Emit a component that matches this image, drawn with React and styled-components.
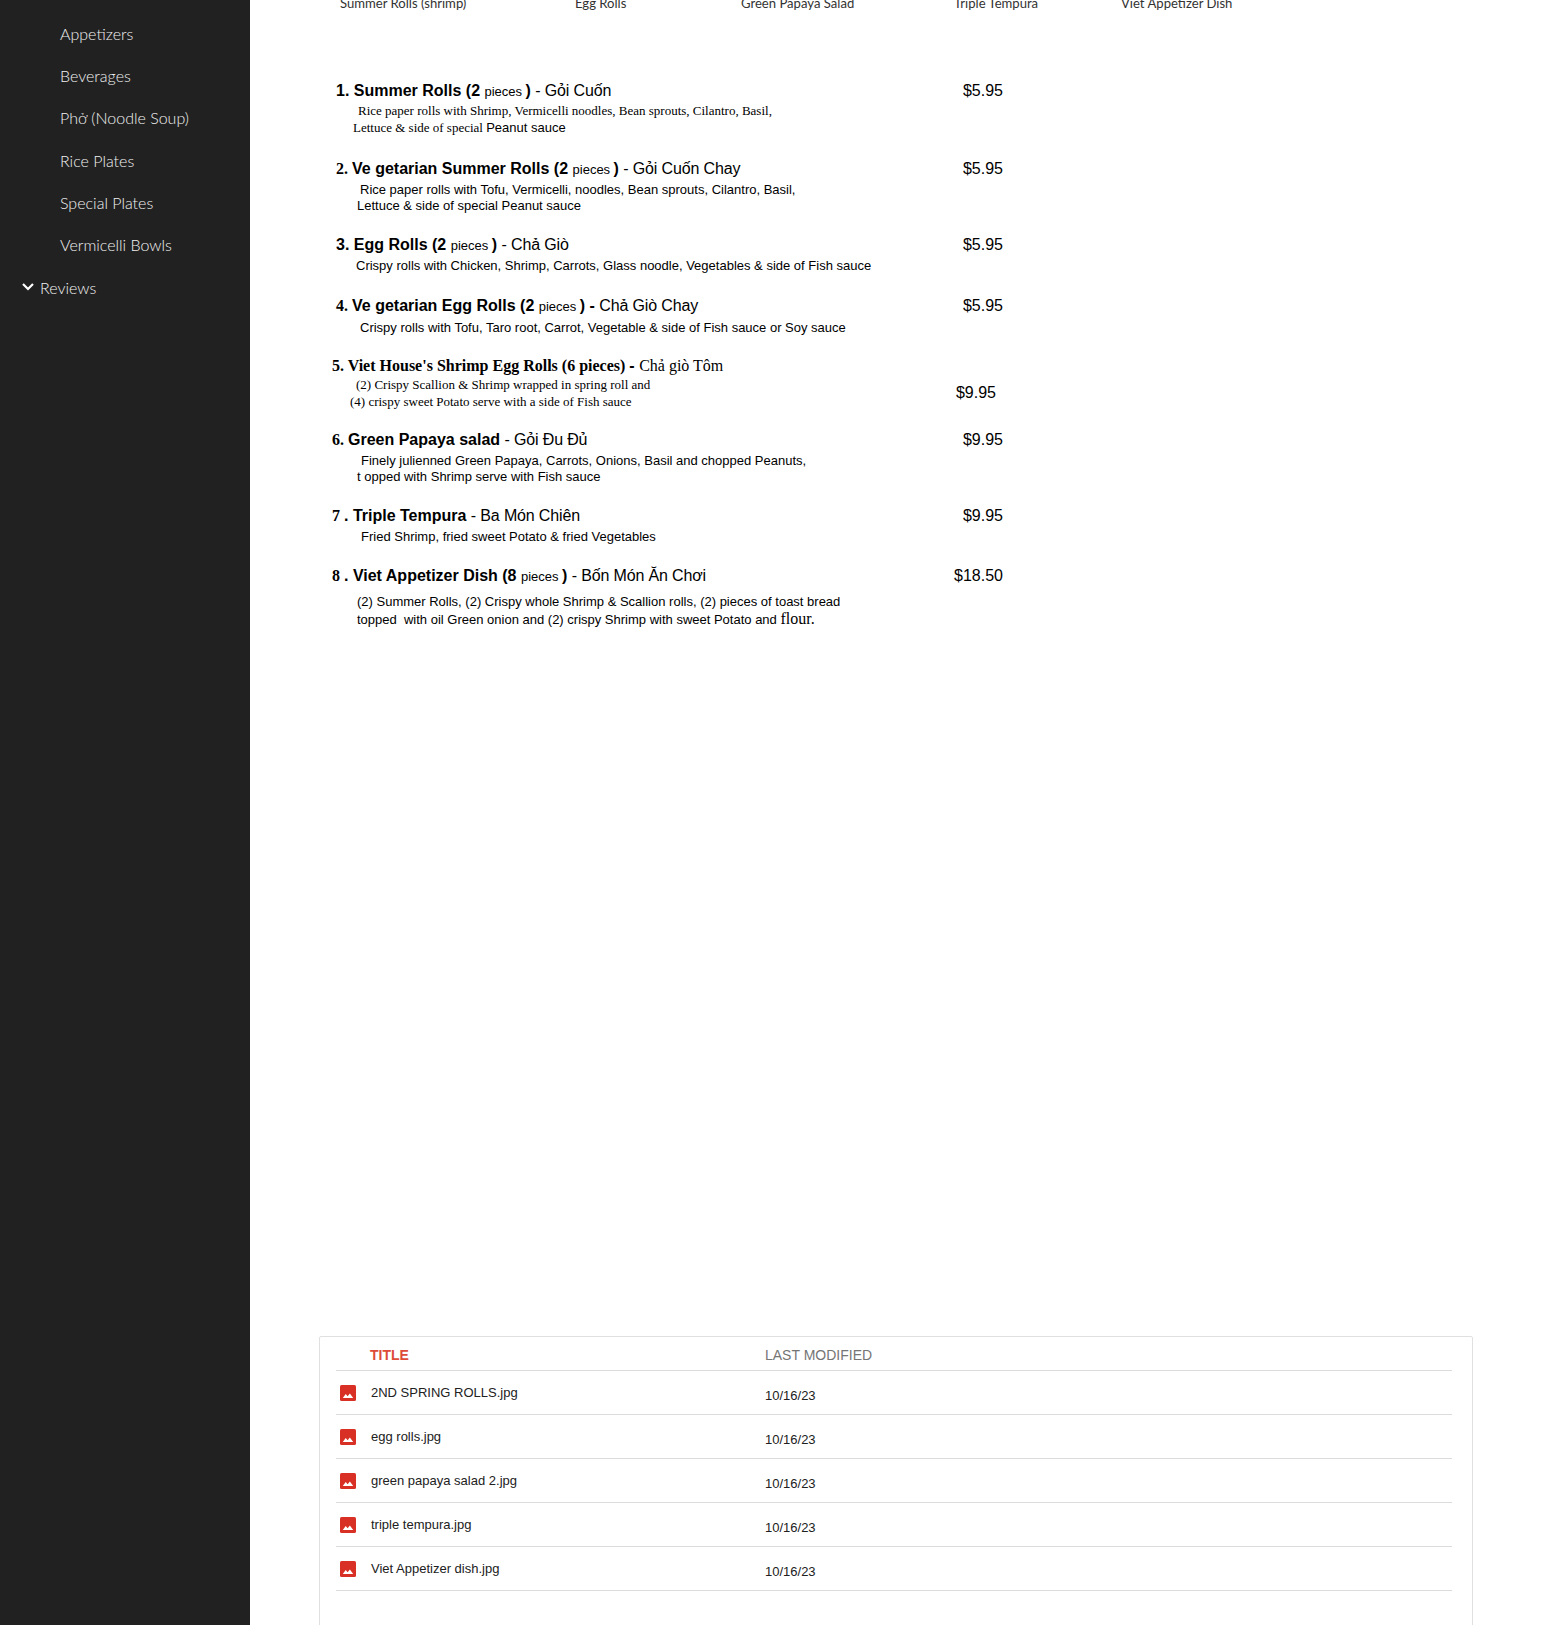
import React from "react"
import styled, { createGlobalStyle } from "styled-components"

const GlobalStyle = createGlobalStyle`
  html, body {
    margin: 0;
    padding: 0;
    background: #fff;
  }
  body {
    font-family: "Liberation Sans", Arial, sans-serif;
    color: #000;
  }
`

const navItems = [
  "Appetizers",
  "Beverages",
  "Phở (Noodle Soup)",
  "Rice Plates",
  "Special Plates",
  "Vermicelli Bowls",
]

const thumbs = [
  { label: "Summer Rolls (shrimp)", width: 235 },
  { label: "Egg Rolls", width: 166 },
  { label: "Green Papaya Salad", width: 213 },
  { label: "Triple Tempura", width: 167 },
  { label: "Viet Appetizer Dish", width: 200 },
]

const files = [
  "2ND SPRING ROLLS.jpg",
  "egg rolls.jpg",
  "green papaya salad 2.jpg",
  "triple tempura.jpg",
  "Viet Appetizer dish.jpg",
]

function ImageIcon() {
  return (
    <svg width="16" height="16" viewBox="0 0 16 16">
      <rect width="16" height="16" rx="1.5" fill="#d93025" />
      <path d="M2.8 13 L5.7 9 L7.6 11.2 L9.9 8.4 L13.2 13 Z" fill="#fff" />
    </svg>
  )
}

function Chevron() {
  return (
    <svg width="14" height="10" viewBox="0 0 14 10">
      <path d="M2 2 L7 7 L12 2" fill="none" stroke="#fff" strokeWidth="2.2" />
    </svg>
  )
}

export default function App() {
  return (
    <Page>
      <GlobalStyle />
      <Sidebar>
        {navItems.map((item) => (
          <NavItem key={item}>{item}</NavItem>
        ))}
        <NavParent>
          <Chevron />
          <span>Reviews</span>
        </NavParent>
      </Sidebar>
      <Content>
        <ThumbRow>
          {thumbs.map((t) => (
            <Thumb key={t.label} $width={t.width}>
              {t.label}
            </Thumb>
          ))}
        </ThumbRow>

        <MenuList>
          <Item $top={69}>
            <ItemBody>
              <Title $indent={4}>
                <b>1. Summer Rolls (2</b> <Small>pieces</Small> <Close>)</Close> <Tail>- Gỏi Cuốn</Tail>
              </Title>
              <Desc $top={1} $indent={26} $serif>
                Rice paper rolls with Shrimp, Vermicelli noodles, Bean sprouts, Cilantro, Basil,
              </Desc>
              <Desc $top={1} $indent={21} $serif>
                Lettuce &amp; side of special <SansRun>Peanut sauce</SansRun>
              </Desc>
            </ItemBody>
            <Price>$5.95</Price>
          </Item>

          <Item $top={23}>
            <ItemBody>
              <Title $indent={4}>
                <SerifBold>2. </SerifBold><b>Ve getarian Summer Rolls (2</b> <Small>pieces</Small> <Close>)</Close> <Tail>- Gỏi Cuốn Chay</Tail>
              </Title>
              <Desc $top={2} $indent={28}>
                Rice paper rolls with Tofu, Vermicelli, noodles, Bean sprouts, Cilantro, Basil,
              </Desc>
              <Desc $indent={25}>Lettuce &amp; side of special Peanut sauce</Desc>
            </ItemBody>
            <Price>$5.95</Price>
          </Item>

          <Item $top={21}>
            <ItemBody>
              <Title $indent={4}>
                <b>3. Egg Rolls (2</b> <Small>pieces</Small> <Close>)</Close> <Tail>- Chả Giò</Tail>
              </Title>
              <Desc $top={2} $indent={24}>
                Crispy rolls with Chicken, Shrimp, Carrots, Glass noodle, Vegetables &amp; side of Fish sauce
              </Desc>
            </ItemBody>
            <Price>$5.95</Price>
          </Item>

          <Item $top={22}>
            <ItemBody>
              <Title $indent={4}>
                <SerifBold>4. </SerifBold><b>Ve getarian Egg Rolls (2</b> <Small>pieces</Small> <Close>) -</Close> <Tail>Chả Giò Chay</Tail>
              </Title>
              <Desc $top={3} $indent={28}>
                Crispy rolls with Tofu, Taro root, Carrot, Vegetable &amp; side of Fish sauce or Soy sauce
              </Desc>
            </ItemBody>
            <Price>$5.95</Price>
          </Item>

          <Item $top={20}>
            <ItemBody>
              <Title>
                <SerifBold>5. Viet House's Shrimp Egg Rolls (6 pieces) </SerifBold><b>-</b> <SerifRun>Chả giò Tôm</SerifRun>
              </Title>
              <Desc $top={1} $indent={24} $serif>
                (2) Crispy Scallion &amp; Shrimp wrapped in spring roll and
              </Desc>
              <Desc $top={1} $indent={18} $serif>
                (4) crispy sweet Potato serve with a side of Fish sauce
              </Desc>
            </ItemBody>
            <Price $centered>$9.95</Price>
          </Item>

          <Item $top={20}>
            <ItemBody>
              <Title>
                <SerifBold>6. </SerifBold><b>Green Papaya salad</b> <Tail>- Gỏi Đu Đủ</Tail>
              </Title>
              <Desc $top={3} $indent={29}>
                Finely julienned Green Papaya, Carrots, Onions, Basil and chopped Peanuts,
              </Desc>
              <Desc $indent={25}>t opped with Shrimp serve with Fish sauce</Desc>
            </ItemBody>
            <Price>$9.95</Price>
          </Item>

          <Item $top={21}>
            <ItemBody>
              <Title>
                <SerifBold>7 </SerifBold><b>. Triple Tempura</b> <Tail>- Ba Món Chiên</Tail>
              </Title>
              <Desc $top={3} $indent={29}>
                Fried Shrimp, fried sweet Potato &amp; fried Vegetables
              </Desc>
            </ItemBody>
            <Price>$9.95</Price>
          </Item>

          <Item $top={21}>
            <ItemBody>
              <Title>
                <SerifBold>8 </SerifBold><b>. Viet Appetizer Dish (8</b> <Small>pieces</Small> <Close>)</Close> <Tail>- Bốn Món Ăn Chơi</Tail>
              </Title>
              <Desc $top={7} $indent={25}>
                (2) Summer Rolls, (2) Crispy whole Shrimp &amp; Scallion rolls, (2) pieces of toast bread
              </Desc>
              <Desc $top={1} $indent={25}>
                topped&nbsp; with oil Green onion and (2) crispy Shrimp with sweet Potato and <Flour>flour.</Flour>
              </Desc>
            </ItemBody>
            <Price>$18.50</Price>
          </Item>
        </MenuList>

        <FileCard>
          <HeaderRow>
            <span />
            <TitleHead>TITLE</TitleHead>
            <ModifiedHead>LAST MODIFIED</ModifiedHead>
          </HeaderRow>
          {files.map((name) => (
            <FileRow key={name}>
              <IconCell>
                <ImageIcon />
              </IconCell>
              <FileName>{name}</FileName>
              <FileDate>10/16/23</FileDate>
            </FileRow>
          ))}
        </FileCard>
      </Content>
    </Page>
  )
}

const Page = styled.div`
  display: flex;
  width: 1542px;
  height: 1625px;
  overflow: hidden;
`

const Sidebar = styled.nav`
  flex: 0 0 250px;
  background: #212121;
  padding-top: 13px;
  font-family: Lato, sans-serif;
  font-weight: 300;
  font-size: 16px;
  color: #f1f1f1;
`

const NavItem = styled.div`
  height: 42.2px;
  line-height: 42px;
  padding-left: 60px;
`

const NavParent = styled.div`
  height: 42px;
  display: flex;
  align-items: center;
  gap: 5px;
  padding-left: 21px;
`

const Content = styled.main`
  flex: 1;
  min-width: 0;
`

const ThumbRow = styled.div`
  display: flex;
  align-items: flex-end;
  height: 12px;
  overflow: hidden;
  padding-left: 90px;
`

const Thumb = styled.div`
  flex: 0 0 ${(p) => p.$width}px;
  font-family: Lato, sans-serif;
  font-size: 13.1px;
  line-height: 17px;
  color: #333;
`

const MenuList = styled.div`
  padding-left: 82px;
  width: 671px;
`

const Item = styled.div`
  display: flex;
  margin-top: ${(p) => p.$top}px;
`

const ItemBody = styled.div`
  flex: 1;
  min-width: 0;
`

const Title = styled.div`
  font-size: 16px;
  line-height: 20px;
  padding-left: ${(p) => p.$indent || 0}px;
  white-space: nowrap;
`

const Small = styled.span`
  font-size: 13px;
`

const Close = styled.b`
  margin-left: -1px;
`

const Tail = styled.span`
  letter-spacing: -0.15px;
`

const SerifBold = styled.b`
  font-family: "Liberation Serif", serif;
`

const SerifRun = styled.span`
  font-family: "Liberation Serif", serif;
`

const SansRun = styled.span`
  font-family: "Liberation Sans", sans-serif;
`

const Desc = styled.div`
  font-family: ${(p) => (p.$serif ? '"Liberation Serif", serif' : '"Liberation Sans", sans-serif')};
  font-size: 13px;
  line-height: 16px;
  margin-top: ${(p) => p.$top || 0}px;
  padding-left: ${(p) => p.$indent || 0}px;
  white-space: nowrap;
`

const Flour = styled.span`
  font-family: "Liberation Serif", serif;
  font-size: 16px;
`

const Price = styled.div`
  font-size: 16px;
  line-height: 20px;
  align-self: ${(p) => (p.$centered ? "center" : "flex-start")};
  margin-right: ${(p) => (p.$centered ? 7 : 0)}px;
  padding-top: ${(p) => (p.$centered ? 20 : 0)}px;
`

const FileCard = styled.section`
  box-sizing: border-box;
  width: 1154px;
  margin: 708px 0 0 69px;
  padding: 1px 20px 0 16px;
  height: 400px;
  border: 1px solid #e0e0e0;
  border-radius: 2px 2px 0 0;
  font-size: 13px;
`

const HeaderRow = styled.div`
  display: grid;
  grid-template-columns: 34px 395px 1fr;
  align-items: center;
  box-sizing: border-box;
  height: 33px;
  padding-top: 2px;
  border-bottom: 1px solid #dcdcdc;
  font-size: 14px;
`

const TitleHead = styled.span`
  color: #dd4b39;
  font-weight: 700;
`

const ModifiedHead = styled.span`
  color: #757575;
`

const FileRow = styled.div`
  display: grid;
  grid-template-columns: 35px 394px 1fr;
  height: 43px;
  border-bottom: 1px solid #dcdcdc;
  color: #212121;
  line-height: 16px;
`

const IconCell = styled.div`
  padding: 14px 0 0 4px;
  line-height: 0;
`

const FileName = styled.div`
  padding-top: 14px;
`

const FileDate = styled.div`
  padding-top: 17px;
`
